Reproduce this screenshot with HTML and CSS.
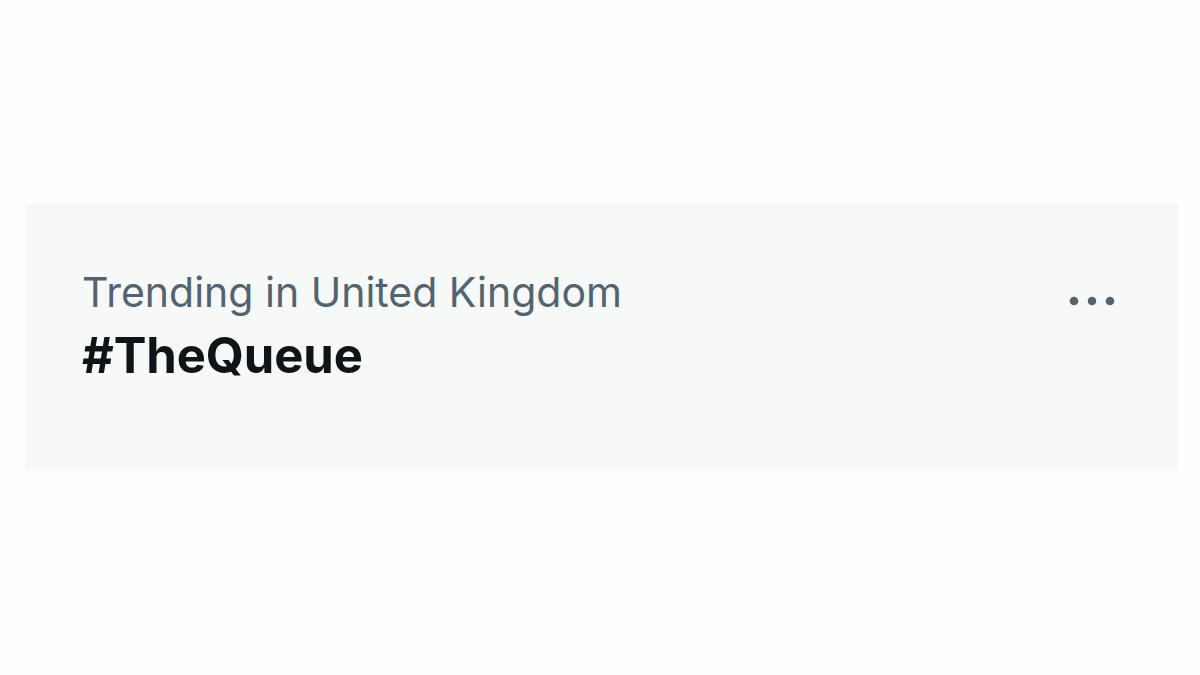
FILE: index.html
```html
<!DOCTYPE html>
<html>
<head>
<meta charset="utf-8">
<link rel="stylesheet" href="styles.css">
</head>
<body>
<div class="page">
  <div class="card">
    <div class="text">
      <div class="meta">Trending in United Kingdom</div>
      <div class="tag">#TheQueue</div>
    </div>
    <div class="more">
      <svg width="48" height="12" viewBox="0 0 48 12"><circle cx="6" cy="6" r="4.3" fill="#536471"/><circle cx="24" cy="6" r="4.3" fill="#536471"/><circle cx="42" cy="6" r="4.3" fill="#536471"/></svg>
    </div>
  </div>
</div>
</body>
</html>
```
FILE: styles.css
```css
html, body { margin: 0; padding: 0; background: #fefefe; }
.page { width: 1200px; height: 675px; padding-top: 203px; box-sizing: border-box; padding-left: 25px; }
.card {
  width: 1153px; height: 268px; background: #f7f9f9;
  display: flex; justify-content: space-between; align-items: flex-start;
  box-sizing: border-box; padding: 63px 62px 0 57px;
}
.meta { font-family: Inter, "Noto Sans", sans-serif; font-size: 41px; color: #536471; line-height: 52px; letter-spacing: 0px; }
.tag { font-family: Inter, "Noto Sans", sans-serif; font-size: 49px; font-weight: 700; color: #0f1419; line-height: 60px; margin-top: 8px; letter-spacing: -0.1px; }
.more { padding-top: 29px; }
.more svg { display: block; }
```
